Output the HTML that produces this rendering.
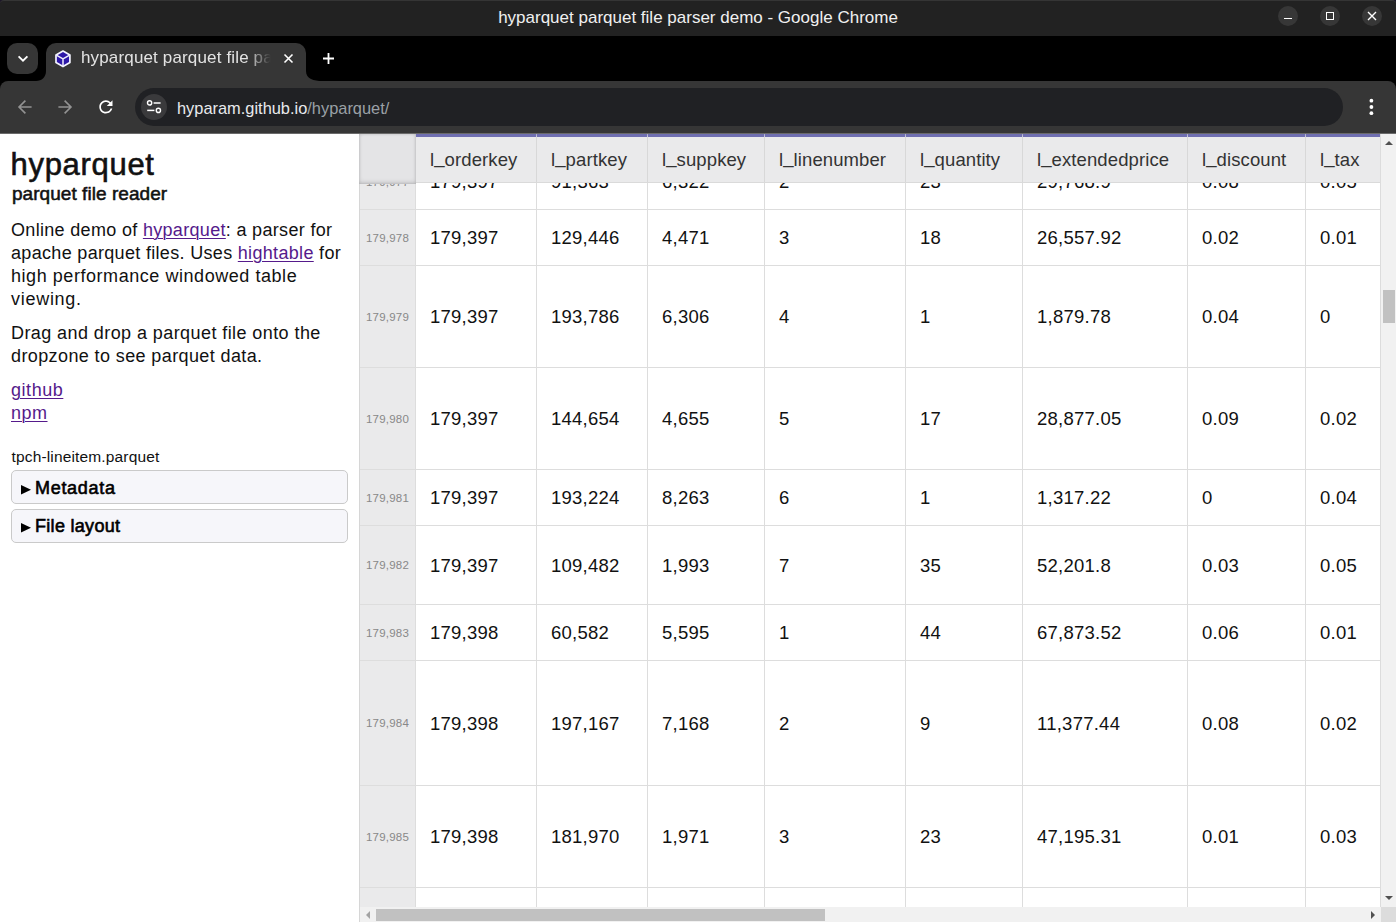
<!DOCTYPE html>
<html><head><meta charset="utf-8"><title>hyparquet</title><style>
*{box-sizing:border-box;margin:0;padding:0}
html,body{width:1396px;height:922px;overflow:hidden;background:#fff;font-family:"Liberation Sans",sans-serif}
.a{position:absolute}
.t{position:absolute;white-space:nowrap}
#side .t{color:#111}
.p{font-size:18px;letter-spacing:0.4px;line-height:23px}
.lnk{color:#551a8b;text-decoration:underline;text-decoration-thickness:1px;text-underline-offset:2px}
.det{position:absolute;left:11px;width:337px;border:1px solid #cacaca;border-radius:5px;background:#f6f6fa}
.cell{position:absolute;font-size:18.5px;line-height:20px;color:#111;white-space:nowrap}
.hd{position:absolute;font-size:18.5px;line-height:20px;color:#333;white-space:nowrap}
.us{position:relative;top:-3px}
.rn{position:absolute;font-size:11.5px;line-height:14px;color:#888;white-space:nowrap;text-align:right;width:50px}
</style></head><body>
<div class="a" style="left:0;top:0;width:1396px;height:10px;background:#1c1628"></div>
<div class="a" style="left:0;top:0;width:1396px;height:36px;background:#222;border-radius:4px 4px 0 0;border-top:1px solid #353535"></div>
<div class="a" style="left:0;top:36px;width:1396px;height:60px;background:#000"></div>
<div class="a" style="left:0;top:81px;width:1396px;height:52px;background:#363636;border-radius:8px 8px 0 0"></div>
<div class="a" style="left:0;top:133px;width:1396px;height:1px;background:#6a6a6a"></div>
<div class="t" style="left:0;width:1396px;text-align:center;top:7.8px;font-size:17px;line-height:20px;color:#f0f0f0">hyparquet parquet file parser demo - Google Chrome</div>
<div class="a" style="left:1278px;top:6px;width:20px;height:20px;border-radius:10px;background:#373737"></div>
<div class="a" style="left:1320px;top:6px;width:20px;height:20px;border-radius:10px;background:#373737"></div>
<div class="a" style="left:1362px;top:6px;width:20px;height:20px;border-radius:10px;background:#373737"></div>
<div class="a" style="left:1284px;top:17.5px;width:8px;height:1.6px;background:#fff"></div>
<div class="a" style="left:1326px;top:12px;width:8px;height:8px;border:1.5px solid #fff"></div>
<svg class="a" style="left:1366px;top:10px" width="12" height="12" viewBox="0 0 12 12"><path d="M2 2L10 10M10 2L2 10" stroke="#fff" stroke-width="1.4"/></svg>
<div class="a" style="left:7px;top:43px;width:31px;height:31px;border-radius:10px;background:#363636"></div>
<svg class="a" style="left:15.7px;top:50.6px" width="14" height="14" viewBox="0 0 14 14"><path d="M2.6 5.4L7 9.6L11.4 5.4" stroke="#fff" stroke-width="1.9" fill="none"/></svg>
<div class="a" style="left:46px;top:43px;width:260px;height:40px;background:#363636;border-radius:10px 10px 0 0"></div>
<svg class="a" style="left:36px;top:71px" width="10" height="10" viewBox="0 0 10 10"><path d="M0 10H10V0C10 6 6 10 0 10Z" fill="#363636"/></svg>
<svg class="a" style="left:306px;top:71px" width="16" height="10" viewBox="0 0 16 10"><path d="M0 0V10H16C8 10 0 8 0 0Z" fill="#363636"/></svg>
<svg class="a" style="left:54px;top:49px" width="18" height="20" viewBox="0 0 18 20"><path d="M9 2L15.9 6V13.6L9 17.6L2 13.6V6Z" fill="#2d17a8" stroke="#f4f4ff" stroke-width="1.7" stroke-linejoin="round"/><path d="M2.3 6.2L9 10L15.6 6.2M9 10V17.3" stroke="#ecebfa" stroke-width="1.5" fill="none"/></svg>
<div class="t" style="left:81px;top:48px;width:195px;overflow:hidden;font-size:17px;letter-spacing:0.15px;line-height:20px;color:#e3e3e3;-webkit-mask-image:linear-gradient(90deg,#000 166px,transparent 190px)">hyparquet parquet file parser demo</div>
<svg class="a" style="left:282.8px;top:53px" width="11" height="11" viewBox="0 0 11 11"><path d="M1.5 1.5L9.5 9.5M9.5 1.5L1.5 9.5" stroke="#fff" stroke-width="1.6"/></svg>
<svg class="a" style="left:322.3px;top:52.2px" width="13" height="13" viewBox="0 0 13 13"><path d="M6.5 1V12M1 6.5H12" stroke="#fff" stroke-width="1.8"/></svg>
<svg class="a" style="left:16px;top:98px" width="18" height="18" viewBox="0 0 18 18"><path d="M15.6 9H3M9.4 2.6L3 9L9.4 15.4" stroke="#939393" stroke-width="1.6" fill="none"/></svg>
<svg class="a" style="left:56px;top:98px" width="18" height="18" viewBox="0 0 18 18"><path d="M2.4 9H15M8.6 2.6L15 9L8.6 15.4" stroke="#939393" stroke-width="1.6" fill="none"/></svg>
<svg class="a" style="left:95.9px;top:97.1px" width="19.8" height="19.8" viewBox="0 0 24 24"><path d="M17.65 6.35A7.958 7.958 0 0 0 12 4c-4.42 0-7.99 3.580-7.99 8s3.57 8 7.99 8c3.73 0 6.84-2.55 7.73-6h-2.08A5.990 5.990 0 0 1 12 18c-3.31 0-6-2.69-6-6s2.69-6 6-6c1.66 0 3.14.69 4.22 1.78L13 11h7V4l-2.35 2.35z" fill="#fff"/></svg>
<div class="a" style="left:135px;top:88px;width:1208px;height:38px;border-radius:19px;background:#202124"></div>
<div class="a" style="left:141px;top:94px;width:26px;height:26px;border-radius:13px;background:#3a3a3c"></div>
<svg class="a" style="left:146px;top:99px" width="16" height="16" viewBox="0 0 16 16"><circle cx="3.6" cy="3.9" r="2.1" stroke="#fff" stroke-width="1.4" fill="none"/><path d="M7.6 4H14.6" stroke="#fff" stroke-width="1.5"/><circle cx="12.4" cy="11.4" r="2.1" stroke="#fff" stroke-width="1.4" fill="none"/><path d="M1.2 11.4H8.4" stroke="#fff" stroke-width="1.5"/></svg>
<div class="t" style="left:177px;top:98.6px;font-size:16.4px;line-height:18px;color:#e8eaed">hyparam.github.io<span style="color:#9aa0a6">/hyparquet/</span></div>
<svg class="a" style="left:1364px;top:96px" width="16" height="22" viewBox="0 0 16 22"><circle cx="7.4" cy="4.7" r="1.9" fill="#fff"/><circle cx="7.4" cy="11" r="1.9" fill="#fff"/><circle cx="7.4" cy="17.2" r="1.9" fill="#fff"/></svg>
<div class="t" style="left:10.5px;top:144.76px;font-size:31px;line-height:39px;color:#111;letter-spacing:0.7px;-webkit-text-stroke:0.6px #111">hyparquet</div>
<div class="t" style="left:12px;top:181.92px;font-size:19px;line-height:24px;color:#111;letter-spacing:0.05px;-webkit-text-stroke:0.55px #111">parquet file reader</div>
<div class="t" style="left:11px;top:218.76px;font-size:18px;line-height:22px;letter-spacing:0.32px;color:#111;">Online demo of <span class="lnk">hyparquet</span>: a parser for</div>
<div class="t" style="left:11px;top:241.76px;font-size:18px;line-height:22px;letter-spacing:0.32px;color:#111;">apache parquet files. Uses <span class="lnk">hightable</span> for</div>
<div class="t" style="left:11px;top:264.76px;font-size:18px;line-height:22px;letter-spacing:0.32px;color:#111;letter-spacing:0.55px">high performance windowed table</div>
<div class="t" style="left:11px;top:287.76px;font-size:18px;line-height:22px;letter-spacing:0.32px;color:#111;letter-spacing:0.72px">viewing.</div>
<div class="t" style="left:11px;top:321.76px;font-size:18px;line-height:22px;letter-spacing:0.32px;color:#111;letter-spacing:0.42px">Drag and drop a parquet file onto the</div>
<div class="t" style="left:11px;top:344.76px;font-size:18px;line-height:22px;letter-spacing:0.32px;color:#111;letter-spacing:0.39px">dropzone to see parquet data.</div>
<div class="t" style="left:11px;top:378.76px;font-size:18px;line-height:22px;letter-spacing:0.32px;color:#111;letter-spacing:0.55px"><span class="lnk">github</span></div>
<div class="t" style="left:11px;top:402.26px;font-size:18px;line-height:22px;letter-spacing:0.32px;color:#111;letter-spacing:0.5px"><span class="lnk">npm</span></div>
<div class="t" style="left:11.5px;top:447.13px;font-size:15.5px;line-height:19px;color:#111;letter-spacing:0.15px">tpch-lineitem.parquet</div>
<div class="det" style="top:470px;height:34px"></div>
<div class="det" style="top:509px;height:34px"></div>
<svg class="a" style="left:21px;top:485px" width="10" height="10" viewBox="0 0 10 10"><path d="M0 0L10 4.7L0 9.4Z" fill="#000"/></svg>
<svg class="a" style="left:21px;top:523px" width="10" height="10" viewBox="0 0 10 10"><path d="M0 0L10 4.7L0 9.4Z" fill="#000"/></svg>
<div class="t" style="left:35px;top:476.76px;font-size:18px;line-height:22px;color:#000;letter-spacing:0.7px;-webkit-text-stroke:0.6px #000">Metadata</div>
<div class="t" style="left:35px;top:514.76px;font-size:18px;line-height:22px;color:#000;letter-spacing:0.3px;-webkit-text-stroke:0.6px #000">File layout</div>
<div class="a" style="left:359px;top:134px;width:1021px;height:788px;overflow:hidden;background:#fff">
<div class="a" style="left:0;top:0;width:56px;height:773px;background:#eaeaeb"></div>
<div class="a" style="left:0;top:0;width:1px;height:788px;background:#d6d6d6"></div>
<div class="a" style="left:56px;top:0;width:1px;height:773px;background:#dddddd"></div>
<div class="a" style="left:177px;top:0;width:1px;height:773px;background:#dddddd"></div>
<div class="a" style="left:288px;top:0;width:1px;height:773px;background:#dddddd"></div>
<div class="a" style="left:405px;top:0;width:1px;height:773px;background:#dddddd"></div>
<div class="a" style="left:546px;top:0;width:1px;height:773px;background:#dddddd"></div>
<div class="a" style="left:663px;top:0;width:1px;height:773px;background:#dddddd"></div>
<div class="a" style="left:828px;top:0;width:1px;height:773px;background:#dddddd"></div>
<div class="a" style="left:946px;top:0;width:1px;height:773px;background:#dddddd"></div>
<div class="a" style="left:1px;top:75px;width:1021px;height:1px;background:#dddddd"></div>
<div class="rn" style="left:0px;top:41.02px;width:50px;letter-spacing:0.2px">179,977</div>
<div class="cell" style="left:71px;top:37.59px;letter-spacing:0.25px">179,397</div>
<div class="cell" style="left:192px;top:37.59px;letter-spacing:0.25px">91,363</div>
<div class="cell" style="left:303px;top:37.59px;letter-spacing:0.25px">6,322</div>
<div class="cell" style="left:420px;top:37.59px;letter-spacing:0.25px">2</div>
<div class="cell" style="left:561px;top:37.59px;letter-spacing:0.25px">23</div>
<div class="cell" style="left:678px;top:37.59px;letter-spacing:0.25px">29,768.9</div>
<div class="cell" style="left:843px;top:37.59px;letter-spacing:0.25px">0.08</div>
<div class="cell" style="left:961px;top:37.59px;letter-spacing:0.25px">0.05</div>
<div class="a" style="left:1px;top:131px;width:1021px;height:1px;background:#dddddd"></div>
<div class="rn" style="left:0px;top:97.02px;width:50px;letter-spacing:0.2px">179,978</div>
<div class="cell" style="left:71px;top:93.59px;letter-spacing:0.25px">179,397</div>
<div class="cell" style="left:192px;top:93.59px;letter-spacing:0.25px">129,446</div>
<div class="cell" style="left:303px;top:93.59px;letter-spacing:0.25px">4,471</div>
<div class="cell" style="left:420px;top:93.59px;letter-spacing:0.25px">3</div>
<div class="cell" style="left:561px;top:93.59px;letter-spacing:0.25px">18</div>
<div class="cell" style="left:678px;top:93.59px;letter-spacing:0.25px">26,557.92</div>
<div class="cell" style="left:843px;top:93.59px;letter-spacing:0.25px">0.02</div>
<div class="cell" style="left:961px;top:93.59px;letter-spacing:0.25px">0.01</div>
<div class="a" style="left:1px;top:233px;width:1021px;height:1px;background:#dddddd"></div>
<div class="rn" style="left:0px;top:176.02px;width:50px;letter-spacing:0.2px">179,979</div>
<div class="cell" style="left:71px;top:172.59px;letter-spacing:0.25px">179,397</div>
<div class="cell" style="left:192px;top:172.59px;letter-spacing:0.25px">193,786</div>
<div class="cell" style="left:303px;top:172.59px;letter-spacing:0.25px">6,306</div>
<div class="cell" style="left:420px;top:172.59px;letter-spacing:0.25px">4</div>
<div class="cell" style="left:561px;top:172.59px;letter-spacing:0.25px">1</div>
<div class="cell" style="left:678px;top:172.59px;letter-spacing:0.25px">1,879.78</div>
<div class="cell" style="left:843px;top:172.59px;letter-spacing:0.25px">0.04</div>
<div class="cell" style="left:961px;top:172.59px;letter-spacing:0.25px">0</div>
<div class="a" style="left:1px;top:335px;width:1021px;height:1px;background:#dddddd"></div>
<div class="rn" style="left:0px;top:278.02px;width:50px;letter-spacing:0.2px">179,980</div>
<div class="cell" style="left:71px;top:274.59px;letter-spacing:0.25px">179,397</div>
<div class="cell" style="left:192px;top:274.59px;letter-spacing:0.25px">144,654</div>
<div class="cell" style="left:303px;top:274.59px;letter-spacing:0.25px">4,655</div>
<div class="cell" style="left:420px;top:274.59px;letter-spacing:0.25px">5</div>
<div class="cell" style="left:561px;top:274.59px;letter-spacing:0.25px">17</div>
<div class="cell" style="left:678px;top:274.59px;letter-spacing:0.25px">28,877.05</div>
<div class="cell" style="left:843px;top:274.59px;letter-spacing:0.25px">0.09</div>
<div class="cell" style="left:961px;top:274.59px;letter-spacing:0.25px">0.02</div>
<div class="a" style="left:1px;top:391px;width:1021px;height:1px;background:#dddddd"></div>
<div class="rn" style="left:0px;top:357.02px;width:50px;letter-spacing:0.2px">179,981</div>
<div class="cell" style="left:71px;top:353.59px;letter-spacing:0.25px">179,397</div>
<div class="cell" style="left:192px;top:353.59px;letter-spacing:0.25px">193,224</div>
<div class="cell" style="left:303px;top:353.59px;letter-spacing:0.25px">8,263</div>
<div class="cell" style="left:420px;top:353.59px;letter-spacing:0.25px">6</div>
<div class="cell" style="left:561px;top:353.59px;letter-spacing:0.25px">1</div>
<div class="cell" style="left:678px;top:353.59px;letter-spacing:0.25px">1,317.22</div>
<div class="cell" style="left:843px;top:353.59px;letter-spacing:0.25px">0</div>
<div class="cell" style="left:961px;top:353.59px;letter-spacing:0.25px">0.04</div>
<div class="a" style="left:1px;top:470px;width:1021px;height:1px;background:#dddddd"></div>
<div class="rn" style="left:0px;top:424.02px;width:50px;letter-spacing:0.2px">179,982</div>
<div class="cell" style="left:71px;top:421.59px;letter-spacing:0.25px">179,397</div>
<div class="cell" style="left:192px;top:421.59px;letter-spacing:0.25px">109,482</div>
<div class="cell" style="left:303px;top:421.59px;letter-spacing:0.25px">1,993</div>
<div class="cell" style="left:420px;top:421.59px;letter-spacing:0.25px">7</div>
<div class="cell" style="left:561px;top:421.59px;letter-spacing:0.25px">35</div>
<div class="cell" style="left:678px;top:421.59px;letter-spacing:0.25px">52,201.8</div>
<div class="cell" style="left:843px;top:421.59px;letter-spacing:0.25px">0.03</div>
<div class="cell" style="left:961px;top:421.59px;letter-spacing:0.25px">0.05</div>
<div class="a" style="left:1px;top:526px;width:1021px;height:1px;background:#dddddd"></div>
<div class="rn" style="left:0px;top:492.02px;width:50px;letter-spacing:0.2px">179,983</div>
<div class="cell" style="left:71px;top:488.59px;letter-spacing:0.25px">179,398</div>
<div class="cell" style="left:192px;top:488.59px;letter-spacing:0.25px">60,582</div>
<div class="cell" style="left:303px;top:488.59px;letter-spacing:0.25px">5,595</div>
<div class="cell" style="left:420px;top:488.59px;letter-spacing:0.25px">1</div>
<div class="cell" style="left:561px;top:488.59px;letter-spacing:0.25px">44</div>
<div class="cell" style="left:678px;top:488.59px;letter-spacing:0.25px">67,873.52</div>
<div class="cell" style="left:843px;top:488.59px;letter-spacing:0.25px">0.06</div>
<div class="cell" style="left:961px;top:488.59px;letter-spacing:0.25px">0.01</div>
<div class="a" style="left:1px;top:651px;width:1021px;height:1px;background:#dddddd"></div>
<div class="rn" style="left:0px;top:582.02px;width:50px;letter-spacing:0.2px">179,984</div>
<div class="cell" style="left:71px;top:579.59px;letter-spacing:0.25px">179,398</div>
<div class="cell" style="left:192px;top:579.59px;letter-spacing:0.25px">197,167</div>
<div class="cell" style="left:303px;top:579.59px;letter-spacing:0.25px">7,168</div>
<div class="cell" style="left:420px;top:579.59px;letter-spacing:0.25px">2</div>
<div class="cell" style="left:561px;top:579.59px;letter-spacing:0.25px">9</div>
<div class="cell" style="left:678px;top:579.59px;letter-spacing:0.25px">11,377.44</div>
<div class="cell" style="left:843px;top:579.59px;letter-spacing:0.25px">0.08</div>
<div class="cell" style="left:961px;top:579.59px;letter-spacing:0.25px">0.02</div>
<div class="a" style="left:1px;top:753px;width:1021px;height:1px;background:#dddddd"></div>
<div class="rn" style="left:0px;top:696.02px;width:50px;letter-spacing:0.2px">179,985</div>
<div class="cell" style="left:71px;top:692.59px;letter-spacing:0.25px">179,398</div>
<div class="cell" style="left:192px;top:692.59px;letter-spacing:0.25px">181,970</div>
<div class="cell" style="left:303px;top:692.59px;letter-spacing:0.25px">1,971</div>
<div class="cell" style="left:420px;top:692.59px;letter-spacing:0.25px">3</div>
<div class="cell" style="left:561px;top:692.59px;letter-spacing:0.25px">23</div>
<div class="cell" style="left:678px;top:692.59px;letter-spacing:0.25px">47,195.31</div>
<div class="cell" style="left:843px;top:692.59px;letter-spacing:0.25px">0.01</div>
<div class="cell" style="left:961px;top:692.59px;letter-spacing:0.25px">0.03</div>
<div class="a" style="left:1px;top:809px;width:1021px;height:1px;background:#dddddd"></div>
<div class="rn" style="left:0px;top:775.02px;width:50px;letter-spacing:0.2px">179,986</div>
<div class="cell" style="left:71px;top:771.59px;letter-spacing:0.25px"></div>
<div class="cell" style="left:192px;top:771.59px;letter-spacing:0.25px"></div>
<div class="cell" style="left:303px;top:771.59px;letter-spacing:0.25px"></div>
<div class="cell" style="left:420px;top:771.59px;letter-spacing:0.25px"></div>
<div class="cell" style="left:561px;top:771.59px;letter-spacing:0.25px"></div>
<div class="cell" style="left:678px;top:771.59px;letter-spacing:0.25px"></div>
<div class="cell" style="left:843px;top:771.59px;letter-spacing:0.25px"></div>
<div class="cell" style="left:961px;top:771.59px;letter-spacing:0.25px"></div>
<div class="a" style="left:57px;top:0;width:965px;height:49px;background:#eaeaeb;border-top:3px solid #706fb1;border-bottom:1px solid #dadada"></div>
<div class="a" style="left:177px;top:3px;width:1px;height:45px;background:#d8d8d8"></div>
<div class="a" style="left:177px;top:0;width:1px;height:3px;background:linear-gradient(#a8a8cc,#d0d0dc)"></div>
<div class="a" style="left:288px;top:3px;width:1px;height:45px;background:#d8d8d8"></div>
<div class="a" style="left:288px;top:0;width:1px;height:3px;background:linear-gradient(#a8a8cc,#d0d0dc)"></div>
<div class="a" style="left:405px;top:3px;width:1px;height:45px;background:#d8d8d8"></div>
<div class="a" style="left:405px;top:0;width:1px;height:3px;background:linear-gradient(#a8a8cc,#d0d0dc)"></div>
<div class="a" style="left:546px;top:3px;width:1px;height:45px;background:#d8d8d8"></div>
<div class="a" style="left:546px;top:0;width:1px;height:3px;background:linear-gradient(#a8a8cc,#d0d0dc)"></div>
<div class="a" style="left:663px;top:3px;width:1px;height:45px;background:#d8d8d8"></div>
<div class="a" style="left:663px;top:0;width:1px;height:3px;background:linear-gradient(#a8a8cc,#d0d0dc)"></div>
<div class="a" style="left:828px;top:3px;width:1px;height:45px;background:#d8d8d8"></div>
<div class="a" style="left:828px;top:0;width:1px;height:3px;background:linear-gradient(#a8a8cc,#d0d0dc)"></div>
<div class="a" style="left:946px;top:3px;width:1px;height:45px;background:#d8d8d8"></div>
<div class="a" style="left:946px;top:0;width:1px;height:3px;background:linear-gradient(#a8a8cc,#d0d0dc)"></div>
<div class="hd" style="left:71px;top:15.59px;letter-spacing:0.1px">l<span class=us>_</span>orderkey</div>
<div class="hd" style="left:192px;top:15.59px;letter-spacing:0.1px">l<span class=us>_</span>partkey</div>
<div class="hd" style="left:303px;top:15.59px;letter-spacing:0.1px">l<span class=us>_</span>suppkey</div>
<div class="hd" style="left:420px;top:15.59px;letter-spacing:0.1px">l<span class=us>_</span>linenumber</div>
<div class="hd" style="left:561px;top:15.59px;letter-spacing:0.1px">l<span class=us>_</span>quantity</div>
<div class="hd" style="left:678px;top:15.59px;letter-spacing:0.1px">l<span class=us>_</span>extendedprice</div>
<div class="hd" style="left:843px;top:15.59px;letter-spacing:0.1px">l<span class=us>_</span>discount</div>
<div class="hd" style="left:961px;top:15.59px;letter-spacing:0.1px">l<span class=us>_</span>tax</div>
<div class="a" style="left:0;top:0;width:57px;height:50px;background:#e4e4e6;box-shadow:inset 0 -2px 4px rgba(0,0,0,0.12),inset 0 0 3px rgba(0,0,0,0.16)"></div>
</div>
<div class="a" style="left:1380px;top:134px;width:16px;height:773px;background:#f1f1f1;border-left:1px solid #dcdcdc"></div>
<div class="a" style="left:1383px;top:290px;width:12px;height:33px;background:#c1c1c1"></div>
<svg class="a" style="left:1385px;top:141px" width="8" height="4" viewBox="0 0 8 4"><path d="M0 4L4 0L8 4Z" fill="#505050"/></svg>
<svg class="a" style="left:1385px;top:896px" width="8" height="4" viewBox="0 0 8 4"><path d="M0 0L4 4L8 0Z" fill="#505050"/></svg>
<div class="a" style="left:360px;top:907px;width:1021px;height:15px;background:#f1f1f1"></div>
<div class="a" style="left:376px;top:909px;width:449px;height:12px;background:#c1c1c1"></div>
<svg class="a" style="left:366px;top:911px" width="4" height="8" viewBox="0 0 4 8"><path d="M4 0L0 4L4 8Z" fill="#a3a3a3"/></svg>
<svg class="a" style="left:1371px;top:911px" width="4" height="8" viewBox="0 0 4 8"><path d="M0 0L4 4L0 8Z" fill="#505050"/></svg>
<div class="a" style="left:1381px;top:907px;width:15px;height:15px;background:#dcdcdc"></div>
</body></html>
